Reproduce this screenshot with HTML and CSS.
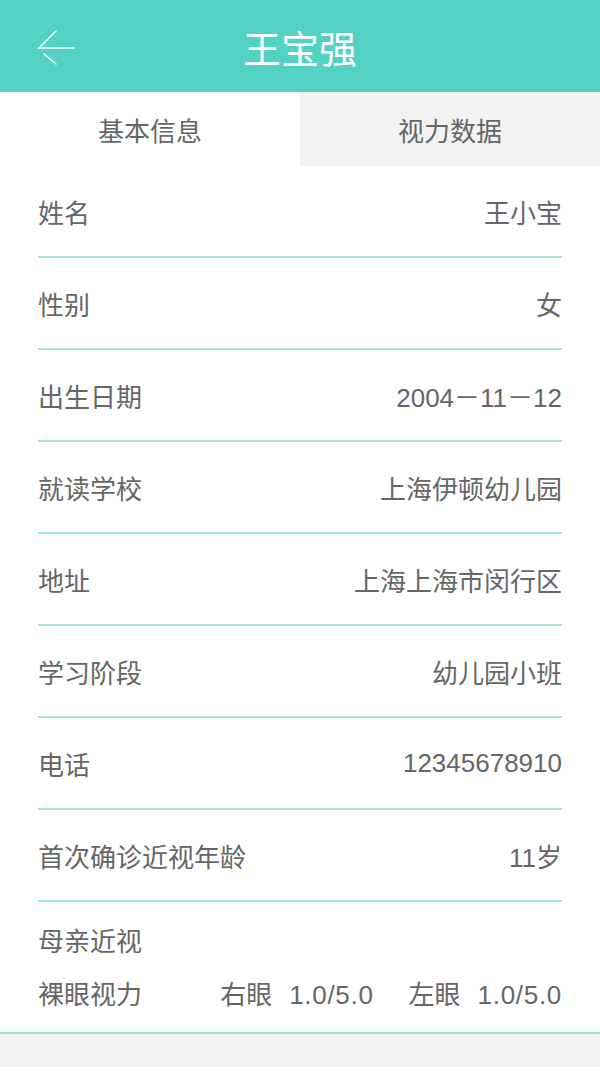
FILE: index.html
```html
<!DOCTYPE html>
<html lang="zh-CN">
<head>
    <meta charset="UTF-8">
    <meta name="viewport" content="width=device-width, initial-scale=1.0">
    <title>王宝强</title>
    <link rel="stylesheet" href="styles.css">
</head>
<body>
    <div class="topbar">
        <a class="back" href="#">
            <svg width="40" height="40" viewBox="0 0 40 40">
                <path d="M20 9 L3 26 L38 26 M8 32 L20 42" fill="none" stroke="#fff" stroke-width="1.6" stroke-linecap="round"/>
            </svg>
        </a>
        <h1>王宝强</h1>
        <span></span>
    </div>

    <div class="tabs">
        <div class="tab active">基本信息</div>
        <div class="tab">视力数据</div>
    </div>

    <div class="list">
        <div class="row"><span>姓名</span><span>王小宝</span></div>
        <div class="row"><span>性别</span><span>女</span></div>
        <div class="row"><span>出生日期</span><span>2004－11－12</span></div>
        <div class="row"><span>就读学校</span><span>上海伊顿幼儿园</span></div>
        <div class="row"><span>地址</span><span>上海上海市闵行区</span></div>
        <div class="row"><span>学习阶段</span><span>幼儿园小班</span></div>
        <div class="row"><span>电话</span><span>12345678910</span></div>
        <div class="row"><span>首次确诊近视年龄</span><span>11岁</span></div>
        <div class="block">
            <div class="line">母亲近视</div>
            <div class="line split">
                <span>裸眼视力</span>
                <div class="eyes">
                    <span>右眼</span><span class="num">1.0/5.0</span>
                    <span class="gap">左眼</span><span class="num">1.0/5.0</span>
                </div>
            </div>
        </div>
    </div>
</body>
</html>
```

FILE: styles.css
```css
body {
    margin: 0;
    background: #f2f2f2;
    font-family: "Liberation Sans", "Noto Sans CJK SC", sans-serif;
    color: #666;
}
.topbar {
    height: 92px;
    background: #51d2c3;
    display: grid;
    grid-template-columns: 1fr auto 1fr;
    align-items: center;
}
.back {
    display: block;
    width: 40px;
    height: 44px;
    margin-left: 36px;
    margin-top: -4px;
}
.back svg {
    overflow: visible;
}
.topbar h1 {
    margin: 0;
    color: #fff;
    font-size: 38px;
    font-weight: 400;
}
.tabs {
    display: grid;
    grid-template-columns: 1fr 1fr;
    height: 74px;
}
.tab {
    display: flex;
    align-items: center;
    justify-content: center;
    font-size: 26px;
    background: #f2f2f2;
}
.tab.active {
    background: #fff;
}
.list {
    background: #fff;
    border-bottom: 2px solid #9de4dc;
}
.row {
    height: 90px;
    margin: 0 38px;
    border-bottom: 2px solid #a3e7de;
    display: flex;
    justify-content: space-between;
    align-items: center;
    font-size: 26px;
}
.block {
    margin: 0 38px;
    padding: 25px 0 22px;
    font-size: 26px;
}
.line {
    line-height: 30px;
}
.split {
    margin-top: 23px;
    display: flex;
    justify-content: space-between;
}
.eyes {
    display: flex;
    gap: 17px;
}
.eyes .num {
    letter-spacing: 0.7px;
}
.eyes .gap {
    margin-left: 18px;
}
```
